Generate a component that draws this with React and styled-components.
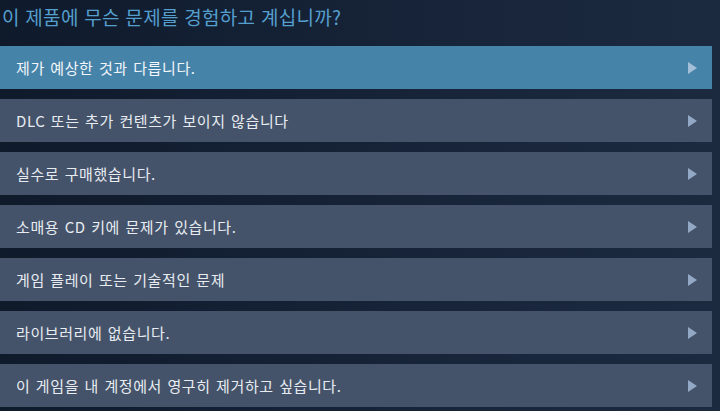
import React from 'react';
import styled, { createGlobalStyle } from 'styled-components';

const GlobalStyle = createGlobalStyle`
  html, body {
    margin: 0;
    padding: 0;
    height: 100%;
  }
  body {
    background: linear-gradient(90deg, #0f1a2b 0%, #152236 45%, #1c2a40 100%);
    font-family: "Noto Sans CJK KR", "Noto Sans", sans-serif;
  }
`;

const Page = styled.div`
  width: 712px;
  height: 411px;
  overflow: hidden;
`;

const Title = styled.h2`
  margin: 0;
  height: 36px;
  padding: 3px 0 0 2px;
  box-sizing: border-box;
  font-size: 19px;
  font-weight: 400;
  line-height: 28px;
  color: #559fcf;
  letter-spacing: 0.3px;
  word-spacing: 1px;
`;

const List = styled.div`
  display: flex;
  flex-direction: column;
  gap: 10px;
  margin-top: 10px;
`;

const Option = styled.div`
  display: flex;
  align-items: center;
  justify-content: space-between;
  height: 43px;
  padding: 0 15px 0 16px;
  background: ${p => (p.$active ? '#4683a9' : '#44536a')};
  color: ${p => (p.$active ? '#f2f6fa' : '#e8ecf1')};
  font-size: 15px;
  letter-spacing: 0.6px;
  word-spacing: 1.5px;
  cursor: pointer;
`;

const Label = styled.span`
  line-height: 20px;
  padding-top: 1px;
`;

const Arrow = styled.span`
  width: 0;
  height: 0;
  border-top: 6.5px solid transparent;
  border-bottom: 6.5px solid transparent;
  border-left: 9px solid ${p => (p.$active ? '#a4bfd8' : '#93a8c4')};
`;

const options = [
  '제가 예상한 것과 다릅니다.',
  'DLC 또는 추가 컨텐츠가 보이지 않습니다',
  '실수로 구매했습니다.',
  '소매용 CD 키에 문제가 있습니다.',
  '게임 플레이 또는 기술적인 문제',
  '라이브러리에 없습니다.',
  '이 게임을 내 계정에서 영구히 제거하고 싶습니다.',
];

export default function App() {
  return (
    <>
      <GlobalStyle />
      <Page>
        <Title>이 제품에 무슨 문제를 경험하고 계십니까?</Title>
        <List>
          {options.map((text, i) => (
            <Option key={text} $active={i === 0}>
              <Label>{text}</Label>
              <Arrow $active={i === 0} />
            </Option>
          ))}
        </List>
      </Page>
    </>
  );
}
